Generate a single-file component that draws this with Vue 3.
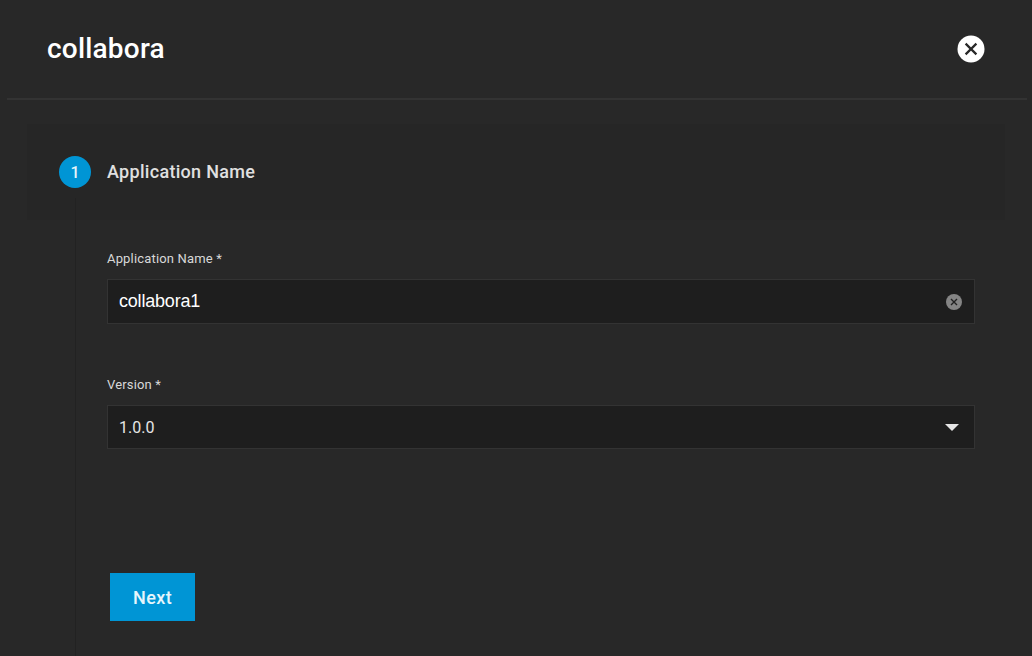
<script setup>
const fields = { name: 'collabora1', version: '1.0.0' }
</script>

<template>
  <div class="page">
    <header class="head">
      <h1 class="title">collabora</h1>
      <button class="close" aria-label="Close">
        <svg viewBox="0 0 28 28" width="28" height="28">
          <circle cx="14" cy="14" r="13.5" fill="#fff" />
          <path d="M8.6 8.6 19.4 19.4M19.4 8.6 8.6 19.4" stroke="#282828" stroke-width="2.2" fill="none" />
        </svg>
      </button>
    </header>
    <main class="body">
      <div class="step-head">
        <span class="num">1</span>
        <span class="step-title">Application Name</span>
      </div>
      <div class="step-content">
        <div class="field first">
          <label class="label">Application Name *</label>
          <div class="input">
            <span class="value name">{{ fields.name }}</span>
            <svg class="clear" viewBox="0 0 16 16" width="16" height="16">
              <circle cx="8" cy="8" r="8" fill="#858585" />
              <path d="M5 5 11 11M11 5 5 11" stroke="#222" stroke-width="1.4" fill="none" />
            </svg>
          </div>
        </div>
        <div class="field second">
          <label class="label">Version *</label>
          <div class="input">
            <span class="value">{{ fields.version }}</span>
            <span class="arrow"></span>
          </div>
        </div>
        <button class="next">Next</button>
      </div>
    </main>
  </div>
</template>

<style scoped>
.page {
  width: 1032px;
  height: 656px;
  overflow: hidden;
  background: #282828;
  font-family: Roboto, "Liberation Sans", sans-serif;
  box-sizing: border-box;
  padding: 0 5px 0 7px;
}
.head {
  height: 98px;
  box-sizing: content-box;
  border-bottom: 2px solid #333;
  display: flex;
  align-items: center;
  justify-content: space-between;
  padding: 0 42px 0 40px;
}
.title {
  margin: 0;
  font-size: 28px;
  font-weight: 500;
  color: #fff;
  line-height: 98px;
  letter-spacing: 0.2px;
}
.close {
  width: 28px;
  height: 28px;
  padding: 0;
  border: 0;
  background: none;
  display: block;
}
.close svg { display: block; }
.body {
  padding: 24px 0 0 20px;
}
.step-head {
  width: 978px;
  height: 96px;
  background: #262626;
  display: flex;
  align-items: center;
  padding-left: 32px;
  box-sizing: border-box;
}
.num {
  width: 32px;
  height: 32px;
  border-radius: 50%;
  background: #0095d5;
  color: #e6f4fa;
  font-size: 16px;
  font-weight: 500;
  display: flex;
  align-items: center;
  justify-content: center;
}
.step-title {
  margin-left: 16px;
  margin-bottom: 2px;
  font-size: 18px;
  font-weight: 500;
  color: #e0e0e0;
  letter-spacing: 0.3px;
}
.step-content {
  margin-left: 48px;
  border-left: 1px solid #222;
  margin-top: -22px;
  padding: 22px 0 0 31px;
  height: 460px;
  width: 900px;
  box-sizing: border-box;
}
.field { width: 868px; }
.first { padding-top: 31px; }
.second { padding-top: 53px; }
.label {
  display: block;
  font-size: 13px;
  line-height: 16px;
  color: #d8d8d8;
  margin-bottom: 12px;
  letter-spacing: 0.17px;
}
.input {
  height: 44px;
  box-sizing: border-box;
  background: #1e1e1e;
  border: 1px solid #333;
  display: flex;
  align-items: center;
  justify-content: space-between;
  padding: 0 12px 0 11px;
}
.first .input { height: 45px; }
.value {
  font-size: 16px;
  color: #e6e6e6;
}
.name {
  font-family: "Liberation Sans", Arial, sans-serif;
  font-size: 18px;
  letter-spacing: -0.2px;
  color: #fff;
}
.clear { display: block; }
.arrow {
  width: 0;
  height: 0;
  border-left: 7px solid transparent;
  border-right: 7px solid transparent;
  border-top: 7px solid #e6e6e6;
  margin-right: 3px;
}
.next {
  display: block;
  margin: 124px 0 0 3px;
  width: 85px;
  height: 48px;
  border: 0;
  background: #0095d5;
  color: #e6f6fc;
  font-family: Roboto, "Liberation Sans", sans-serif;
  font-size: 18px;
  font-weight: 500;
  letter-spacing: 0.4px;
  padding: 0;
}
</style>
